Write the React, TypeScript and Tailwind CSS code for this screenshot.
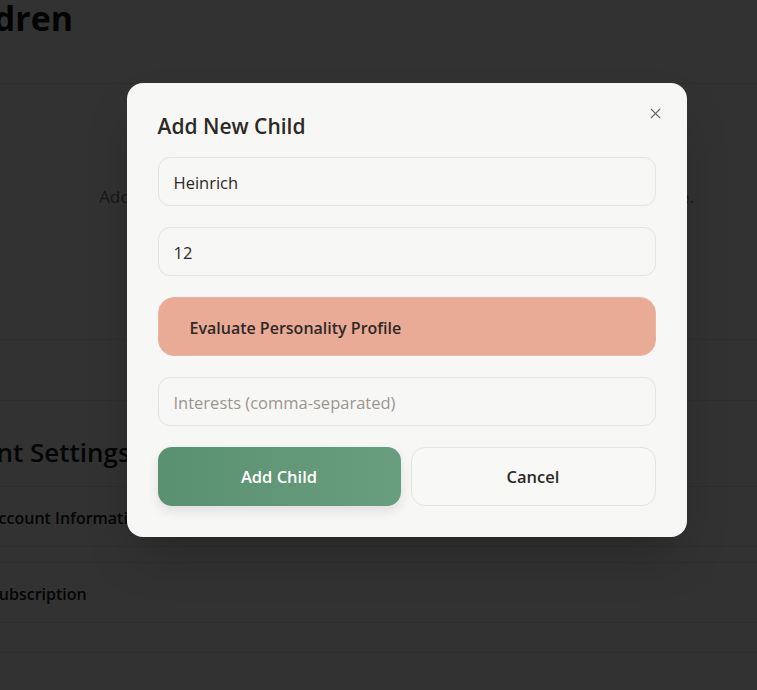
import { X } from "lucide-react";

const font = { fontFamily: '"Segoe UI", "Open Sans", "Noto Sans", sans-serif' };

export default function App() {
  return (
    <div className="relative w-[757px] h-[690px] overflow-hidden bg-[#fafaf8] text-[#1a1a1a]" style={font}>
      {/* page behind the dialog */}
      <div className="flex flex-col">
        <h1 className="-ml-[71px] -mt-[2px] h-[85px] text-[34px] font-bold leading-[40px] text-[#111]">Children</h1>
        <div className="border-y border-[#e6e4e0] h-[257px] flex items-center justify-center pl-[36px]">
          <p className="-mt-[30px] text-[17.2px] text-[#777]">Add your first child to get a personalized learning experience for each one.</p>
        </div>
        <div className="h-[61px] border-b border-[#e6e4e0]"></div>
        <div className="h-[86px] flex items-center border-b border-[#e6e4e0]">
          <h2 className="-ml-[79px] mt-[18px] text-[26px] font-semibold">Account Settings</h2>
        </div>
        <div className="h-[60px] flex items-center border-b border-[#e6e4e0]">
          <span className="-ml-[12px] mt-[2px] text-[16px] font-semibold">Account Information</span>
        </div>
        <div className="h-[16px] border-b border-[#e6e4e0]"></div>
        <div className="h-[60px] flex items-center border-b border-[#e6e4e0]">
          <span className="-ml-[10px] mt-[3px] text-[16px] font-semibold">Subscription</span>
        </div>
        <div className="h-[30px] border-b border-[#e6e4e0]"></div>
      </div>

      {/* overlay */}
      <div className="absolute inset-0 bg-black/80 flex justify-center items-start pt-[83px] pl-[56px]">
        <div className="relative w-[560px] rounded-[16px] bg-[#f7f7f5] px-[31px] pt-[28px] pb-[31px] shadow-2xl">
          <button className="absolute right-[23px] top-[22px] text-[#6b6662]">
            <X size={17} strokeWidth={1.6} />
          </button>
          <h2 className="text-[21px] font-semibold leading-[30px] text-[#2d2926] mb-[16px]">Add New Child</h2>
          <div className="flex flex-col gap-[21px]">
            <input
              defaultValue="Heinrich"
              className="h-[49px] rounded-[12px] border border-[#e6e4e0] bg-[#f7f7f5] px-[15px] pt-[2px] text-[16.5px] text-[#2d2926] outline-none"
            />
            <input
              defaultValue="12"
              className="h-[49px] rounded-[12px] border border-[#e6e4e0] bg-[#f7f7f5] px-[15px] pt-[2px] text-[16.5px] text-[#2d2926] outline-none"
            />
            <button className="h-[59px] rounded-[16px] border border-[#eab5a3] bg-[#e9ab96] px-[31px] pt-[2px] text-left text-[16px] font-semibold text-[#2d2926]">
              Evaluate Personality Profile
            </button>
            <input
              placeholder="Interests (comma-separated)"
              className="h-[49px] rounded-[12px] border border-[#e6e4e0] bg-[#f7f7f5] px-[15px] pt-[2px] text-[16.5px] text-[#2d2926] placeholder:text-[#9c958f] outline-none"
            />
            <div className="flex gap-[10px]">
              <button className="h-[59px] w-[243px] rounded-[14px] bg-gradient-to-r from-[#5a9170] to-[#689e7e] pt-[2px] text-[16.5px] font-semibold text-white shadow-[0_5px_12px_rgba(0,0,0,0.1)]">
                Add Child
              </button>
              <button className="h-[59px] flex-1 rounded-[14px] border border-[#e6e4e0] bg-[#f8f8f6] pt-[2px] text-[16.5px] font-semibold text-[#2d2926]">
                Cancel
              </button>
            </div>
          </div>
        </div>
      </div>
    </div>
  );
}
